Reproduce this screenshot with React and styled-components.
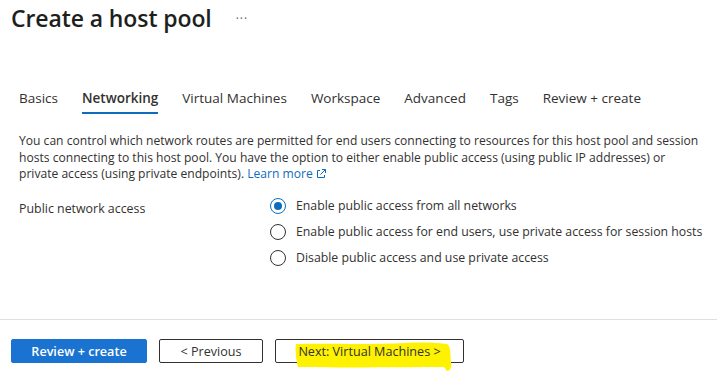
import React, { useState } from 'react';
import styled, { createGlobalStyle } from 'styled-components';

const GlobalStyle = createGlobalStyle`
  html, body {
    margin: 0;
    padding: 0;
    background: #fff;
  }
  body {
    font-family: 'Segoe UI', 'Open Sans', 'Noto Sans', sans-serif;
    color: #323130;
  }
`;

const Page = styled.div`
  width: 717px;
  height: 371px;
  overflow: hidden;
  display: flex;
  flex-direction: column;
`;

const Header = styled.div`
  display: flex;
  align-items: center;
  gap: 24px;
  padding: 0 0 0 11px;
  height: 36px;
`;

const Title = styled.h1`
  margin: 0;
  font-size: 23px;
  font-weight: 600;
  letter-spacing: -0.1px;
  color: #201f1e;
  line-height: 32px;
`;

const More = styled.span`
  font-size: 12px;
  color: #605e5c;
  letter-spacing: 1px;
  margin-top: 0;
`;

const Tabs = styled.nav`
  display: flex;
  gap: 24px;
  padding: 0 0 0 19px;
  margin-top: 50px;
  height: 30px;
`;

const Tab = styled.div`
  position: relative;
  font-size: 13.5px;
  line-height: 20px;
  padding-top: 2px;
  font-weight: ${p => (p.active ? 600 : 400)};
  color: #323130;
  white-space: nowrap;

  &::after {
    content: '';
    display: ${p => (p.active ? 'block' : 'none')};
    position: absolute;
    left: 0;
    right: 0;
    top: 26px;
    height: 2px;
    background: #0f6cbd;
  }
`;

const Description = styled.p`
  margin: 17px 0 0 0;
  padding: 0 0 0 19px;
  font-size: 12.1px;
  line-height: 16.5px;
  color: #323130;
  white-space: nowrap;
`;

const LearnMore = styled.a`
  color: #0f6cbd;
  text-decoration: none;
  svg {
    margin-left: 3px;
    vertical-align: -1px;
  }
`;

const FormRow = styled.div`
  display: grid;
  grid-template-columns: 251px 1fr;
  padding-left: 19px;
  margin-top: 14px;
`;

const Label = styled.div`
  font-size: 12.4px;
  line-height: 18px;
  padding-top: 3px;
`;

const RadioGroup = styled.div`
  display: flex;
  flex-direction: column;
  gap: 8px;
`;

const Option = styled.label`
  display: flex;
  align-items: center;
  gap: 10px;
  font-size: 12.3px;
  line-height: 18px;
  cursor: pointer;
`;

const Circle = styled.span`
  width: 16px;
  height: 16px;
  box-sizing: border-box;
  border-radius: 50%;
  border: 1px solid ${p => (p.checked ? '#0f6cbd' : '#323130')};
  display: flex;
  align-items: center;
  justify-content: center;
  flex-shrink: 0;

  &::after {
    content: '';
    display: ${p => (p.checked ? 'block' : 'none')};
    width: 8px;
    height: 8px;
    border-radius: 50%;
    background: #0f6cbd;
  }
`;

const Spacer = styled.div`
  flex: 1;
`;

const Footer = styled.div`
  border-top: 1px solid #e1dfdd;
  height: 52px;
  display: flex;
  align-items: flex-start;
  gap: 12px;
  padding: 19px 0 0 11px;
  box-sizing: border-box;
`;

const Button = styled.button`
  position: relative;
  height: 24px;
  box-sizing: border-box;
  font-family: inherit;
  font-size: 12.6px;
  padding: 0;
  width: ${p => p.w}px;
  border-radius: 2px;
  cursor: pointer;
  border: 1px solid ${p => (p.primary ? '#1a73d0' : '#323130')};
  background: ${p => (p.primary ? '#1a73d0' : '#fff')};
  color: ${p => (p.primary ? '#fff' : '#323130')};
  font-weight: ${p => (p.primary ? 600 : 400)};
`;

const ButtonText = styled.span`
  position: relative;
  z-index: 1;
`;

const Highlight = styled.svg`
  position: absolute;
  left: 19px;
  top: 2px;
  z-index: 0;
  pointer-events: none;
`;

const options = [
  'Enable public access from all networks',
  'Enable public access for end users, use private access for session hosts',
  'Disable public access and use private access',
];

const tabs = ['Basics', 'Networking', 'Virtual Machines', 'Workspace', 'Advanced', 'Tags', 'Review + create'];

export default function App() {
  const [selected, setSelected] = useState(0);

  return (
    <Page>
      <GlobalStyle />
      <Header>
        <Title>Create a host pool</Title>
        <More>···</More>
      </Header>

      <Tabs>
        {tabs.map(t => (
          <Tab key={t} active={t === 'Networking'}>{t}</Tab>
        ))}
      </Tabs>

      <Description>
        You can control which network routes are permitted for end users connecting to resources for this host pool and session
        <br />
        hosts connecting to this host pool. You have the option to either enable public access (using public IP addresses) or
        <br />
        private access (using private endpoints).{' '}
        <LearnMore href="#">
          Learn more
          <svg width="10" height="10" viewBox="0 0 10 10" fill="none" stroke="#0f6cbd" strokeWidth="1">
            <path d="M4 1.5H1.5v7h7V6" />
            <path d="M6 0.5h3.5V4" />
            <path d="M9.5 0.5L4.5 5.5" />
          </svg>
        </LearnMore>
      </Description>

      <FormRow>
        <Label>Public network access</Label>
        <RadioGroup>
          {options.map((o, i) => (
            <Option key={o} onClick={() => setSelected(i)}>
              <Circle checked={selected === i} />
              {o}
            </Option>
          ))}
        </RadioGroup>
      </FormRow>

      <Spacer />

      <Footer>
        <Button primary w={136}>Review + create</Button>
        <Button w={104}>&lt; Previous</Button>
        <Button w={189}>
          <Highlight width="160" height="30" viewBox="0 0 160 30">
            <path
              d="M1 2 C 30 1, 70 3, 110 1 C 130 0, 145 1, 152 2 C 156 4, 155 12, 156 20 C 157 26, 155 29, 152 29 C 150 27, 150 25, 148 25 C 110 25, 60 26, 3 25 C 1 18, 0 8, 1 2 Z"
              fill="#fff200"
            />
          </Highlight>
          <ButtonText>Next: Virtual Machines &gt;</ButtonText>
        </Button>
      </Footer>
    </Page>
  );
}
